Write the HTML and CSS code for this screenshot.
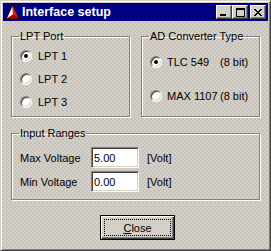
FILE: index.html
```html
<!DOCTYPE html>
<html lang="en">
<head>
  <meta charset="UTF-8"/>
  <title>Interface setup</title>
  <link rel="stylesheet" href="styles.css">
</head>
<body>
  <div class="window">
    <div class="titlebar">
      <svg class="app-icon" width="16" height="16" viewBox="0 0 16 16" aria-hidden="true">
        <polygon points="7.5,0 0.5,15.5 15,15.5" fill="#300000"/>
        <polygon points="7.5,2 2,14.5 8,10.5" fill="#ffffff"/>
        <polygon points="7.5,2 8,10.5 13.5,14" fill="#e81818"/>
        <polygon points="2,14.5 8,10.5 13.5,14 13.8,14.5" fill="#b00000"/>
      </svg>
      <span class="title">Interface setup</span>
      <div class="title-buttons">
        <button class="tb-btn" aria-label="Minimize">
          <svg width="8" height="7" viewBox="0 0 8 7" shape-rendering="crispEdges"><rect x="0" y="5" width="6" height="2" fill="#000"/></svg>
        </button>
        <button class="tb-btn" aria-label="Maximize">
          <svg width="9" height="9" viewBox="0 0 9 9" shape-rendering="crispEdges"><path fill="#000" fill-rule="evenodd" d="M0 0h9v9H0z M1 2h7v6H1z"/></svg>
        </button>
        <button class="tb-btn close" aria-label="Close">
          <svg width="8" height="7" viewBox="0 0 8 7" shape-rendering="crispEdges"><path fill="#000" d="M0 0h2v1H0z M6 0h2v1H6z M1 1h2v1H1z M5 1h2v1H5z M2 2h4v1H2z M3 3h2v1H3z M2 4h4v1H2z M1 5h2v1H1z M5 5h2v1H5z M0 6h2v1H0z M6 6h2v1H6z"/></svg>
        </button>
      </div>
    </div>

    <div class="client">
      <div class="top-row">
        <fieldset class="group lpt">
          <legend>LPT Port</legend>
          <label class="radio-row"><span class="radio checked"></span>LPT 1</label>
          <label class="radio-row"><span class="radio"></span>LPT 2</label>
          <label class="radio-row"><span class="radio"></span>LPT 3</label>
        </fieldset>
        <fieldset class="group adc">
          <legend>AD Converter Type</legend>
          <label class="radio-row"><span class="radio checked"></span><span class="chip">TLC 549</span><span class="bits">(8 bit)</span></label>
          <label class="radio-row"><span class="radio"></span><span class="chip">MAX 1107</span><span class="bits">(8 bit)</span></label>
        </fieldset>
      </div>

      <fieldset class="group ranges">
        <legend>Input Ranges</legend>
        <div class="field-row">
          <span class="field-label">Max Voltage</span>
          <input class="edit" type="text" value="5.00">
          <span class="unit">[Volt]</span>
        </div>
        <div class="field-row">
          <span class="field-label">Min Voltage</span>
          <input class="edit" type="text" value="0.00">
          <span class="unit">[Volt]</span>
        </div>
      </fieldset>

      <div class="actions">
        <button class="btn default"><span class="focus-rect"><u>C</u>lose</span></button>
      </div>
    </div>
  </div>
</body>
</html>
```

FILE: styles.css
```css
:root {
  --face: #d4d0c8;
  --shadow: #808080;
  --dark: #404040;
  --light: #ffffff;
  --title: #000080;
}
* { box-sizing:border-box; margin:0; padding:0; }
body {
  width:271px; height:251px; overflow:hidden;
  font-family:"Liberation Sans", Arial, sans-serif; font-size:11px; color:#000;
  background:var(--face);
}

/* —— Window frame —— */
.window {
  width:271px; height:251px; display:flex; flex-direction:column;
  padding:2px;
  background-color:var(--face);
  background-image:radial-gradient(circle at 2px 2px, #c0bdb6 0.6px, transparent 1.1px),
                   radial-gradient(circle at 2px 2px, #c6c3bc 0.6px, transparent 1.1px);
  background-size:4px 4px, 4px 4px;
  background-position:0 0, 2px 2px;
  border:1px solid; border-color:var(--face) var(--dark) var(--dark) var(--face);
  box-shadow:inset 1px 1px var(--light), inset -1px -1px var(--shadow);
}

/* —— Title bar —— */
.titlebar {
  height:18px; flex:none; display:flex; align-items:center;
  background:var(--title); padding:0 2px;
}
.app-icon { flex:none; }
.title {
  flex:1; color:#fff; font-weight:bold; font-size:12.5px; padding-left:1px;
  white-space:nowrap;
}
.title-buttons { display:flex; align-items:center; }
.tb-btn {
  width:16px; height:14px; display:flex; align-items:center; justify-content:center;
  background:var(--face); border:1px solid; border-color:var(--light) var(--dark) var(--dark) var(--light);
  box-shadow:inset -1px -1px var(--shadow);
}
.tb-btn svg { display:block; }
.tb-btn.close { margin-left:2px; }

/* —— Client area —— */
.client {
  flex:1; display:flex; flex-direction:column;
  padding:9px 8px 0 8px;
}
.top-row {
  display:grid; grid-template-columns:1fr 1fr; gap:11px;
}

.group {
  min-width:0;
  border:1px solid var(--shadow);
  box-shadow:inset 1px 1px var(--light), 1px 1px var(--light);
  padding:1px 8px 3px 8px;
}
.group legend {
  line-height:13px; padding:0 1px; margin-left:-1px;
}

.radio-row {
  display:flex; align-items:center; gap:6px; height:23px;
  white-space:nowrap;
}
.adc { display:flex; flex-direction:column; }
.adc .radio-row { gap:0; }
.adc .radio { margin-right:5px; }
.adc .radio-row:first-of-type { margin-top:6px; }
.adc .radio-row + .radio-row { margin-top:11px; }
.chip { display:inline-block; width:52px; flex:none; }
.bits { margin-left:1px; }

.radio {
  position:relative; flex:none; width:12px; height:12px; border-radius:50%;
  background:#fff;
  border:1px solid; border-color:var(--shadow) var(--light) var(--light) var(--shadow);
  box-shadow:inset 1px 1px var(--dark), inset -1px -1px var(--face);
}
.radio.checked::after {
  content:""; position:absolute; left:3px; top:3px;
  width:4px; height:4px; border-radius:50%; background:#000;
}

/* —— Input ranges —— */
.ranges {
  margin-top:10px;
  padding:7px 8px 7px 8px;
  display:flex; flex-direction:column; gap:3px;
}
.field-row { display:flex; align-items:center; height:21px; }
.field-label { width:71px; flex:none; }
.edit {
  width:48px; height:21px; flex:none;
  font:inherit; color:#000; padding:0 2px;
  background:#fff; outline:none;
  border:1px solid; border-color:var(--shadow) var(--light) var(--light) var(--shadow);
  box-shadow:inset 1px 1px var(--dark), inset -1px -1px var(--face);
}
.unit { margin-left:8px; }

/* —— Buttons —— */
.actions {
  display:flex; justify-content:center; padding-left:4px; margin-top:15px;
}
.btn {
  width:75px; height:25px; font:inherit; color:#000;
  background:var(--face); padding:3px;
  border:1px solid; border-color:var(--light) var(--dark) var(--dark) var(--light);
  box-shadow:inset -1px -1px var(--shadow), inset 1px 1px var(--face);
}
.btn.default {
  border:1px solid #000;
  box-shadow:inset 1px 1px var(--light), inset -1px -1px var(--dark), inset -2px -2px var(--shadow);
}
.focus-rect {
  display:flex; align-items:center; justify-content:center;
  width:100%; height:100%;
  border:1px dotted #000;
}
.focus-rect u { text-decoration-thickness:1px; text-underline-offset:1px; }
```
